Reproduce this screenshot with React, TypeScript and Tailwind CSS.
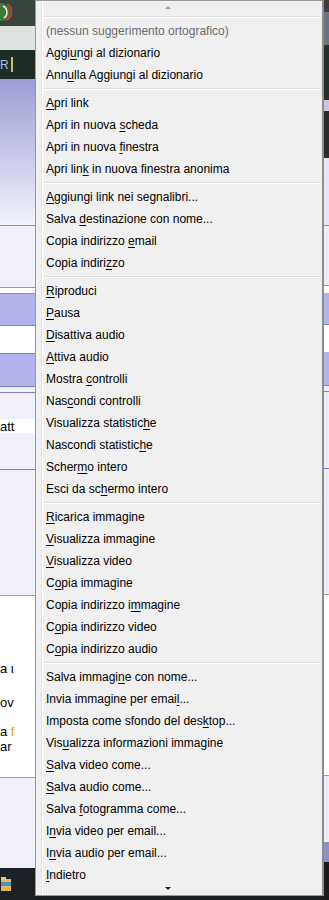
import React from "react";

type Item = { label: string; disabled?: boolean };

// "&" marks the access key letter (underlined)
const groups: Item[][] = [
    [
        { label: "(nessun suggerimento ortografico)", disabled: true },
        { label: "Aggi&ungi al dizionario" },
        { label: "Ann&ulla Aggiungi al dizionario" },
    ],
    [
        { label: "&Apri link" },
        { label: "Apri in nuova &scheda" },
        { label: "Apri in nuova &finestra" },
        { label: "Apri lin&k in nuova finestra anonima" },
    ],
    [
        { label: "&Aggiungi link nei segnalibri..." },
        { label: "Salva &destinazione con nome..." },
        { label: "Copia indirizzo &email" },
        { label: "Copia indiri&zzo" },
    ],
    [
        { label: "&Riproduci" },
        { label: "&Pausa" },
        { label: "&Disattiva audio" },
        { label: "&Attiva audio" },
        { label: "Mostra &controlli" },
        { label: "Nas&condi controlli" },
        { label: "Visualizza statistic&he" },
        { label: "Nascondi statistic&he" },
        { label: "Scher&mo intero" },
        { label: "Esci da sc&hermo intero" },
    ],
    [
        { label: "&Ricarica immagine" },
        { label: "&Visualizza immagine" },
        { label: "&Visualizza video" },
        { label: "C&opia immagine" },
        { label: "Copia indirizzo i&mmagine" },
        { label: "C&opia indirizzo video" },
        { label: "C&opia indirizzo audio" },
    ],
    [
        { label: "Salva immagi&ne con nome..." },
        { label: "Invia immagine per emai&l..." },
        { label: "Imposta come sfondo del des&ktop..." },
        { label: "Vis&ualizza informazioni immagine" },
        { label: "&Salva video come..." },
        { label: "&Salva audio come..." },
        { label: "Salva &fotogramma come..." },
        { label: "I&nvia video per email..." },
        { label: "I&nvia audio per email..." },
        { label: "&Indietro" },
    ],
];

function Label({ text }: { text: string }) {
    const i = text.indexOf("&");
    if (i < 0) return <span>{text}</span>;
    return (
        <span>
            {text.slice(0, i)}
            <span className="underline underline-offset-[2px]">{text[i + 1]}</span>
            {text.slice(i + 2)}
        </span>
    );
}

function Separator() {
    return (
        <div className="h-[6px] py-[2px]">
            <div className="border-t border-b border-t-[#e0e0e0] border-b-white" />
        </div>
    );
}

function LeftBackdrop() {
    return (
        <div className="flex w-[35px] shrink-0 flex-col overflow-hidden font-['Liberation_Sans',sans-serif]">
            <div className="h-[26px] bg-[#37453c]">
                <svg width="12" height="26" viewBox="0 0 12 26">
                    <circle cx="1" cy="12" r="9" fill="#3f7a3a" />
                    <path d="M7 4 A9 9 0 0 1 6 20" stroke="#d23b2b" strokeWidth="2" fill="none" />
                    <path d="M3 6 A7 7 0 0 1 4 18" stroke="#e8e8e8" strokeWidth="1.5" fill="none" />
                </svg>
            </div>
            <div className="h-[24px] bg-[#dfe3df]" />
            <div className="flex h-[29px] items-center gap-[2px] bg-[#1f2b25]">
                <span className="text-[12px] leading-none text-[#9cc4e6]">R</span>
                <div className="h-[15px] w-[2px] bg-[#d8c050]" />
            </div>
            <div className="h-[146px] bg-gradient-to-b from-[#9c9cd4] to-[#f3f3fc]" />
            <div className="h-px bg-[#8a8ad0]" />
            <div className="h-[61px] bg-[#f0f0fa]" />
            <div className="h-px bg-[#9a9ab8]" />
            <div className="h-[5px] bg-white" />
            <div className="h-px bg-[#8a8ad0]" />
            <div className="h-[31px] bg-[#b3b3eb]" />
            <div className="h-px bg-[#8080c8]" />
            <div className="h-[27px] bg-white" />
            <div className="h-px bg-[#8080c8]" />
            <div className="h-[32px] bg-[#b3b3eb]" />
            <div className="h-px bg-[#8080c8]" />
            <div className="h-[5px] bg-[#f0f0fa]" />
            <div className="h-px bg-[#8080c8]" />
            <div className="h-[26px] bg-[#f0f0fa]" />
            <div className="flex h-[14px] items-center whitespace-nowrap bg-white text-[13px] leading-none text-black">
                att
            </div>
            <div className="h-[36px] bg-[#f0f0fa]" />
            <div className="h-px bg-[#8080c8]" />
            <div className="h-[125px] bg-[#f0f0fa]" />
            <div className="h-px bg-[#a0a0a0]" />
            <div className="flex h-[181px] flex-col whitespace-nowrap bg-white pt-[65px] text-[13px] leading-[15px] text-black">
                <div>a ι</div>
                <div className="mt-[19px]">ov</div>
                <div className="mt-[14px]">
                    a <span className="text-[#e8a020]">f</span>
                </div>
                <div>ar</div>
            </div>
            <div className="h-px bg-[#a0a0a0]" />
            <div className="h-[90px] bg-[#f0f0fa]" />
            <div className="flex h-[32px] items-center bg-[#1c2126] pl-[1px]">
                <svg width="10" height="16" viewBox="0 0 10 16">
                    <rect x="0" y="3" width="10" height="12" fill="#e6b84a" />
                    <rect x="0" y="6" width="10" height="4" fill="#4a90d0" />
                    <rect x="0" y="1" width="5" height="3" fill="#f0c860" />
                </svg>
            </div>
        </div>
    );
}

function RightBackdrop() {
    return (
        <div className="flex w-[5px] shrink-0 flex-col">
            <div className="h-[12px] bg-[#3d3d3d]" />
            <div className="h-[33px] bg-[#6b7480]" />
            <div className="h-[55px] bg-[#25302a]" />
            <div className="h-[11px] bg-[#c8c8e8]" />
            <div className="h-[47px] bg-[#2b2b2b]" />
            <div className="h-[67px] bg-[#e6e6f6]" />
            <div className="h-px bg-[#8a8ad0]" />
            <div className="h-[59px] bg-[#eeeef8]" />
            <div className="h-px bg-[#9a9ab8]" />
            <div className="h-[7px] bg-white" />
            <div className="h-[31px] bg-[#b3b3eb]" />
            <div className="h-px bg-[#8080c8]" />
            <div className="h-[27px] bg-white" />
            <div className="h-[33px] bg-[#b3b3eb]" />
            <div className="h-px bg-[#8080c8]" />
            <div className="h-[5px] bg-[#f0f0fa]" />
            <div className="h-px bg-[#8080c8]" />
            <div className="h-[76px] bg-[#eeeef8]" />
            <div className="h-px bg-[#8080c8]" />
            <div className="h-[125px] bg-[#eeeef8]" />
            <div className="h-px bg-[#a0a0a0]" />
            <div className="h-[180px] bg-white" />
            <div className="h-px bg-[#a0a0a0]" />
            <div className="h-[66px] bg-[#eeeef8]" />
            <div className="h-[20px] bg-[#9090c8]" />
            <div className="flex-1 bg-[#1a1a1a]" />
        </div>
    );
}

export default function App() {
    return (
        <div className="flex h-[900px] w-[329px] overflow-hidden bg-[#1b1f22]">
            <LeftBackdrop />

            {/* Context menu */}
            <div className="flex h-[896px] w-[289px] shrink-0 border-t border-b border-l border-r-2 border-[#979797] border-r-[#8c8c8c] bg-[#f0f0f0] font-['Liberation_Sans',sans-serif] text-[12px] text-black">
                {/* Gutter */}
                <div className="w-[5px] shrink-0" />
                <div className="w-px shrink-0 bg-[#e2e3e3]" />
                <div className="w-px shrink-0 bg-white" />

                <div className="flex min-w-0 flex-1 flex-col pr-px">
                    {/* Scroll up */}
                    <div className="flex h-[13px] items-start pl-[122px] pt-[5px]">
                        <div className="h-0 w-0 border-x-[3px] border-b-[3px] border-x-transparent border-b-[#a0a0a0]" />
                    </div>
                    <Separator />

                    {groups.map((group, gi) => (
                        <div key={gi}>
                            {gi > 0 && <Separator />}
                            {group.map((item) => (
                                <div
                                    key={item.label}
                                    className={
                                        "flex h-[22px] items-center whitespace-nowrap pl-[3px] " +
                                        (item.disabled ? "text-[#6d6d6d]" : "text-black")
                                    }
                                >
                                    <Label text={item.label} />
                                </div>
                            ))}
                        </div>
                    ))}

                    {/* Scroll down */}
                    <div className="flex h-[9px] items-start pl-[122px] pt-[1px]">
                        <div className="h-0 w-0 border-x-[3px] border-t-[3px] border-x-transparent border-t-[#202020]" />
                    </div>
                </div>
            </div>

            <RightBackdrop />
        </div>
    );
}
